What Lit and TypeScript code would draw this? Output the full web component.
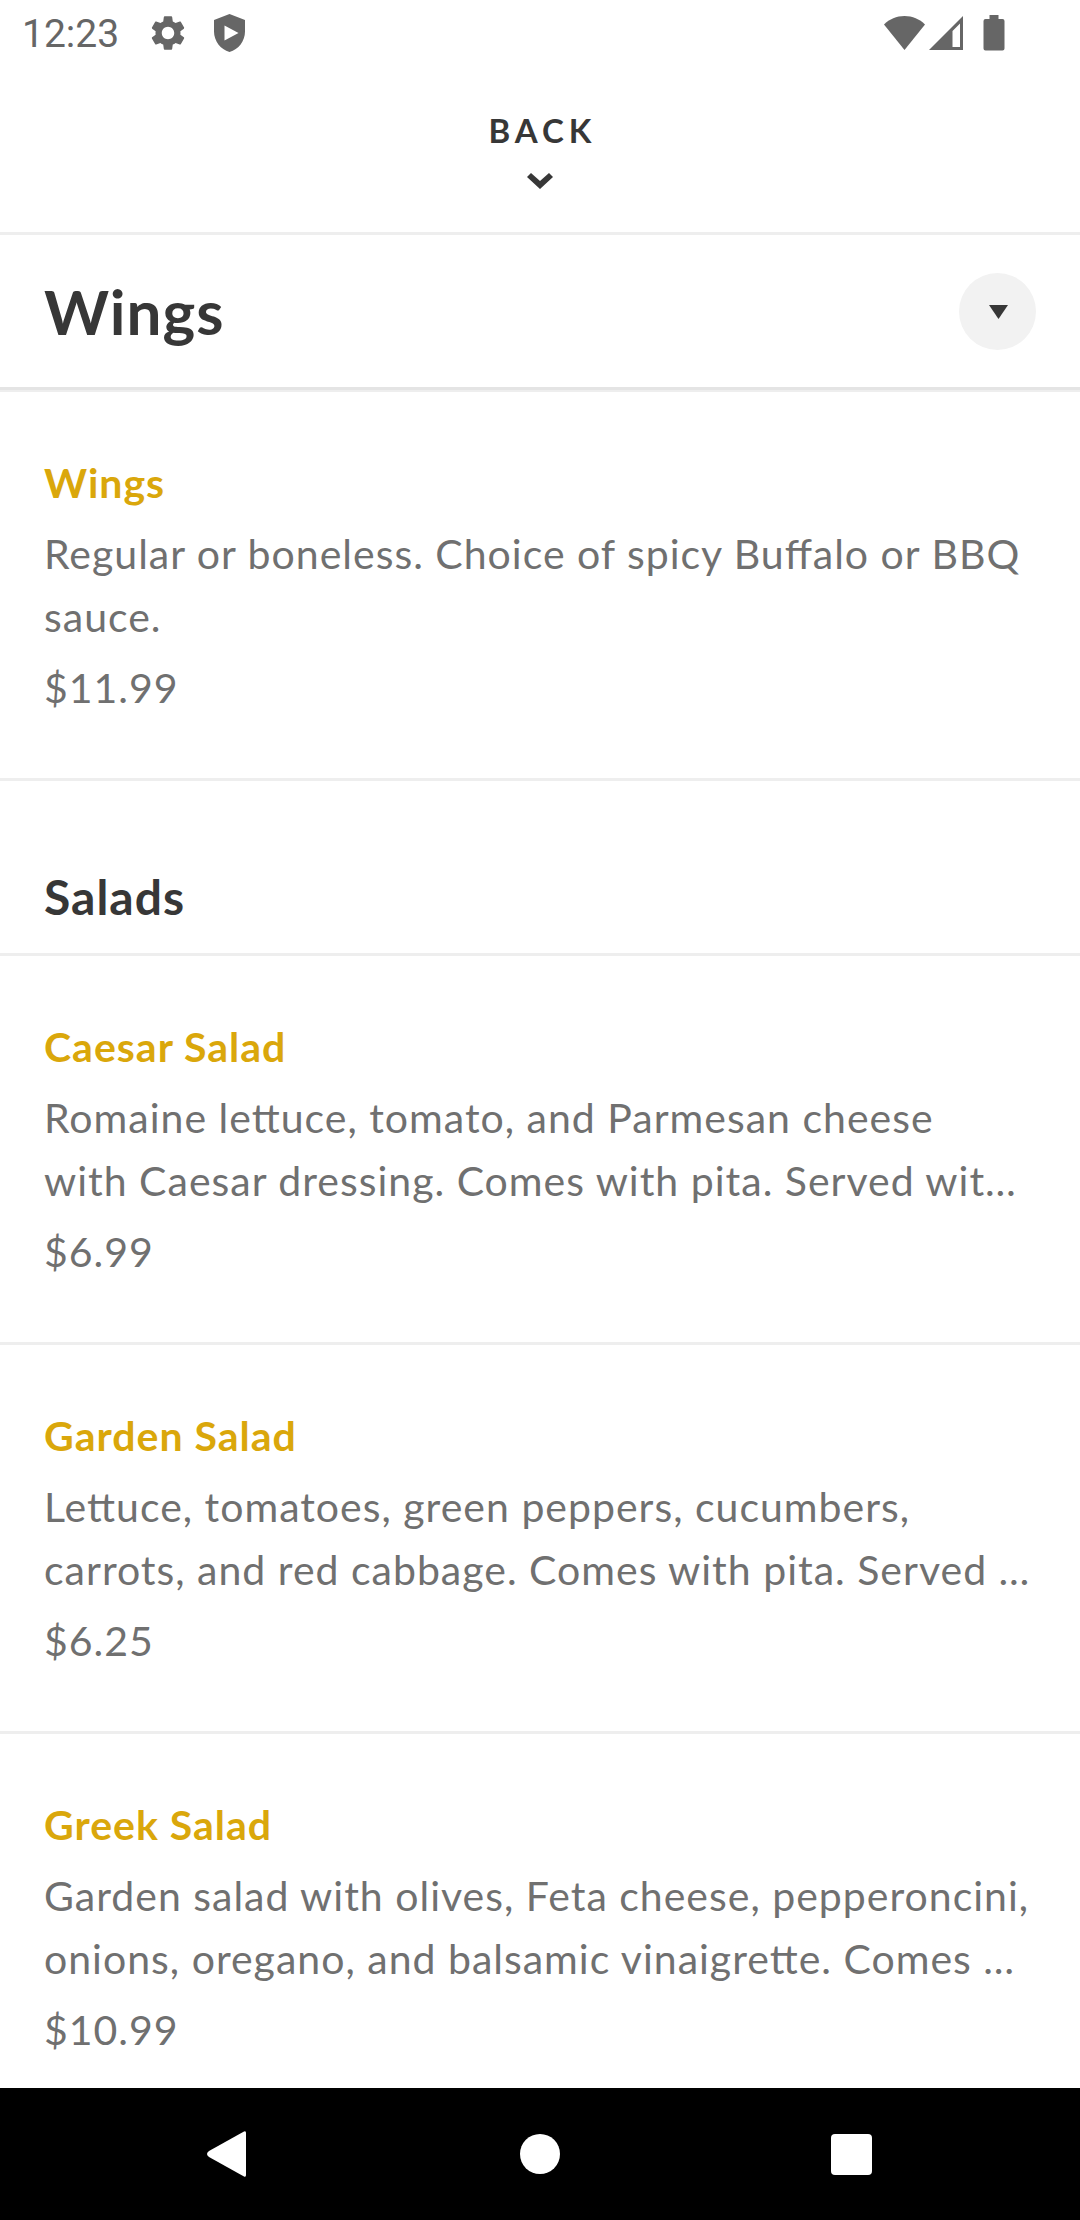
import { LitElement, html, css } from "lit";
import { customElement, property } from "lit/decorators.js";

interface MenuEntry {
  name: string;
  description: string;
  price: string;
}

interface MenuSection {
  title: string;
  entries: MenuEntry[];
}

const WINGS: MenuSection = {
  title: "Wings",
  entries: [
    {
      name: "Wings",
      description: "Regular or boneless. Choice of spicy Buffalo or BBQ sauce.",
      price: "$11.99",
    },
  ],
};

const SALADS: MenuSection = {
  title: "Salads",
  entries: [
    {
      name: "Caesar Salad",
      description:
        "Romaine lettuce, tomato, and Parmesan cheese with\u00a0Caesar dressing. Comes with pita. Served wit…",
      price: "$6.99",
    },
    {
      name: "Garden Salad",
      description:
        "Lettuce, tomatoes, green peppers, cucumbers, carrots, and red cabbage. Comes with pita. Served …",
      price: "$6.25",
    },
    {
      name: "Greek Salad",
      description:
        "Garden salad with olives, Feta cheese, pepperoncini, onions, oregano, and balsamic vinaigrette. Comes …",
      price: "$10.99",
    },
  ],
};

@customElement("status-bar")
export class StatusBar extends LitElement {
  static styles = css`
    :host {
      display: flex;
      align-items: center;
      justify-content: space-between;
      height: 66px;
      padding: 0 75px 0 22px;
      color: #666;
      font: 39px/48px Roboto, sans-serif;
    }
    .group {
      display: flex;
      align-items: center;
    }
    .notices {
      gap: 29px;
    }
    .time {
      padding: 2px 3px 0 0;
    }
    svg {
      display: block;
      fill: currentColor;
    }
    .battery {
      margin-left: 20px;
    }
    .signal {
      margin-left: 4px;
    }
  `;

  render() {
    return html`
      <div class="group notices">
        <span class="time">12:23</span>
        <svg width="34" height="36" viewBox="2.2 2 19.6 20" aria-hidden="true">
          <path
            d="M19.14 12.94c.04-.3.06-.61.06-.94 0-.32-.02-.64-.07-.94l2.03-1.58c.18-.14.23-.41.12-.61l-1.92-3.32c-.12-.22-.37-.29-.59-.22l-2.39.96c-.5-.38-1.03-.7-1.62-.94l-.36-2.54c-.04-.24-.24-.41-.48-.41h-3.84c-.24 0-.43.17-.47.41l-.36 2.54c-.59.24-1.13.57-1.62.94l-2.39-.96c-.22-.08-.47 0-.59.22L2.74 8.87c-.12.21-.08.47.12.61l2.03 1.58c-.05.3-.09.63-.09.94s.02.64.07.94l-2.03 1.58c-.18.14-.23.41-.12.61l1.92 3.32c.12.22.37.29.59.22l2.39-.96c.5.38 1.03.7 1.62.94l.36 2.54c.05.24.24.41.48.41h3.84c.24 0 .44-.17.47-.41l.36-2.54c.59-.24 1.13-.56 1.62-.94l2.39.96c.22.08.47 0 .59-.22l1.92-3.32c.12-.22.07-.47-.12-.61l-2.01-1.58zM12 15.6c-1.98 0-3.6-1.62-3.6-3.6s1.62-3.6 3.6-3.6 3.6 1.62 3.6 3.6-1.62 3.6-3.6 3.6z"
          />
        </svg>
        <svg width="31" height="38" viewBox="0 0 31 38" aria-hidden="true">
          <path
            fill-rule="evenodd"
            d="M15.500 0 31 6V17.500C31 27 24.500 35.500 15.500 38 6.500 35.500 0 27 0 17.500V6ZM10.500 11.500V26.500L24.500 19Z"
          />
        </svg>
      </div>
      <div class="group">
        <svg width="41" height="36" viewBox="0 0 41 36" aria-hidden="true">
          <path d="M0 9.500C5.500 4 12.500 1 20.500 1S35.500 4 41 9.500L20.500 35Z" />
        </svg>
        <svg class="signal" width="34" height="36" viewBox="0 0 34 36" aria-hidden="true">
          <path fill-rule="evenodd" d="M34 1V35H0ZM31 8.500 23.500 16V32H31Z" />
        </svg>
        <svg class="battery" width="22" height="36" viewBox="0 0 22 36" aria-hidden="true">
          <path
            d="M6.500 0H15.500V4H19.500Q21.500 4 21.500 6V33.500Q21.500 35.500 19.500 35.500H2.500Q.5 35.500 .5 33.500V6Q.5 4 2.500 4H6.500Z"
          />
        </svg>
      </div>
    `;
  }
}

@customElement("menu-item")
export class MenuItem extends LitElement {
  @property({ attribute: false }) entry!: MenuEntry;

  static styles = css`
    :host {
      display: block;
      border-bottom: 3px solid #eee;
    }
    .item {
      display: flex;
      flex-direction: column;
      gap: 8px;
      padding: 59px 44px;
      color: #707070;
    }
    .name,
    .text {
      margin: 0;
      font-size: 41px;
      line-height: 63px;
      letter-spacing: 1px;
      font-feature-settings: "liga" 1;
    }
    .name {
      color: #daa70b;
      font-weight: 700;
    }
  `;

  render() {
    return html`
      <article class="item">
        <h3 class="name">${this.entry.name}</h3>
        <p class="text">${this.entry.description}</p>
        <p class="text">${this.entry.price}</p>
      </article>
    `;
  }
}

@customElement("nav-bar")
export class NavBar extends LitElement {
  static styles = css`
    :host {
      display: block;
      background: #000;
    }
    .bar {
      display: flex;
      justify-content: center;
      padding: 0 74px;
    }
    .key {
      flex: 1;
      display: flex;
      align-items: center;
      justify-content: center;
      height: 132px;
      padding: 0;
      border: 0;
      background: none;
    }
    svg {
      display: block;
      fill: #fff;
    }
  `;

  render() {
    return html`
      <nav class="bar" aria-label="System">
        <button class="key" aria-label="Back">
          <svg width="48" height="48" viewBox="0 0 48 48">
            <path d="M39 1.500Q41 .5 41 3V45Q41 47.500 39 46.500L4 27Q0 24 4 21Z" />
          </svg>
        </button>
        <button class="key" aria-label="Home">
          <svg width="48" height="48" viewBox="0 0 48 48"><circle cx="24" cy="24" r="20" /></svg>
        </button>
        <button class="key" aria-label="Overview">
          <svg width="48" height="48" viewBox="0 0 48 48">
            <rect x="4" y="4" width="41" height="41" rx="4" />
          </svg>
        </button>
      </nav>
    `;
  }
}

@customElement("app-root")
export class AppRoot extends LitElement {
  static styles = css`
    :host {
      display: flex;
      flex-direction: column;
      height: 100vh;
      background: #fff;
      color: #373737;
      font-family: Lato, sans-serif;
    }
    .back {
      display: flex;
      flex-direction: column;
      align-items: center;
      gap: 23px;
      padding: 44px 0 43px;
      border: 0;
      border-bottom: 3px solid #eee;
      background: none;
      color: inherit;
      font: 700 33px/40px Lato, sans-serif;
      letter-spacing: 5px;
    }
    .label {
      padding-left: 5px;
    }
    .category {
      display: flex;
      align-items: center;
      justify-content: space-between;
      padding: 38px 44px 37px;
      border-bottom: 3px solid #e4e4e4;
      box-shadow: 0 2px 0 #eee;
    }
    .title {
      margin: 0;
      font-size: 62px;
      line-height: 77px;
      font-weight: 700;
      letter-spacing: 1px;
    }
    .toggle {
      display: flex;
      align-items: center;
      justify-content: center;
      width: 77px;
      height: 77px;
      padding: 0;
      border: 0;
      border-radius: 50%;
      background: #f2f2f2;
      color: inherit;
    }
    svg {
      display: block;
      fill: currentColor;
    }
    .list {
      flex: 1;
      min-height: 0;
      padding-top: 2px;
      overflow-y: auto;
      scrollbar-width: none;
    }
    .section {
      margin: 0;
      padding: 86px 44px 26px;
      border-bottom: 3px solid #eee;
      font-size: 48px;
      line-height: 60px;
      font-weight: 700;
      letter-spacing: 1px;
    }
  `;

  private renderEntries(section: MenuSection) {
    return section.entries.map((entry) => html`<menu-item .entry=${entry}></menu-item>`);
  }

  render() {
    return html`
      <status-bar></status-bar>
      <button class="back">
        <span class="label">BACK</span>
        <svg width="26" height="16" viewBox="0 0 26 16" aria-hidden="true">
          <path d="M4 0 13 8 22 0 26 4 13 16 0 4Z" />
        </svg>
      </button>
      <header class="category">
        <h1 class="title">${WINGS.title}</h1>
        <button class="toggle" aria-label="Choose category">
          <svg width="21" height="15" viewBox="0 0 21 15"><path d="M2 1H21L11.500 15Z" /></svg>
        </button>
      </header>
      <main class="list">
        ${this.renderEntries(WINGS)}
        <h2 class="section">${SALADS.title}</h2>
        ${this.renderEntries(SALADS)}
      </main>
      <nav-bar></nav-bar>
    `;
  }
}
